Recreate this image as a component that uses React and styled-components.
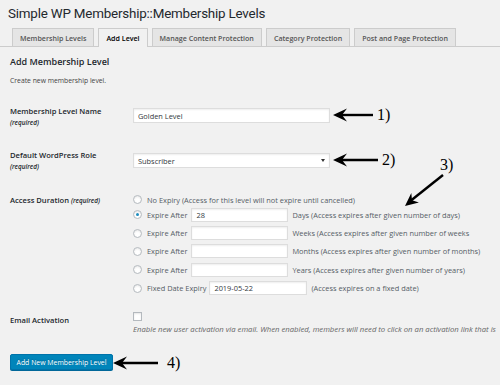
import styled, { createGlobalStyle } from "styled-components";

const GlobalStyle = createGlobalStyle`
  html, body {
    margin: 0;
    padding: 0;
    background: #f1f1f1;
  }
  body {
    font-family: "Open Sans", "Noto Sans", sans-serif;
    color: #23282d;
    overflow: hidden;
  }
`;

const Page = styled.div`
  position: relative;
  width: 500px;
  height: 385px;
  overflow: hidden;
  padding-left: 10px;
  box-sizing: border-box;
`;

const Title = styled.h1`
  margin: 3px 0 0 -2px;
  font-family: Roboto, "Open Sans", sans-serif;
  font-size: 13.4px;
  font-weight: 400;
  letter-spacing: -0.2px;
  line-height: 22px;
  color: #23282d;
  white-space: nowrap;
`;

const TabBar = styled.nav`
  margin: 3px 0 0 -10px;
  padding-left: 12px;
  display: flex;
  gap: 4px;
  border-bottom: 1px solid #ccc;
  height: 18px;
`;

const Tab = styled.span`
  box-sizing: border-box;
  padding: 0 7px;
  display: flex;
  align-items: center;
  font-size: 7.1px;
  font-weight: 600;
  white-space: nowrap;
  border: 1px solid #ccc;
  border-bottom: none;
  background: ${(p) => (p.$active ? "#f1f1f1" : "#e5e5e5")};
  color: ${(p) => (p.$active ? "#000" : "#555")};
  height: ${(p) => (p.$active ? "19px" : "18px")};
`;

const Heading = styled.h2`
  margin: 8px 0 0;
  font-size: 9px;
  font-weight: 600;
  line-height: 14px;
`;

const Intro = styled.p`
  margin: 7px 0 0;
  font-size: 6.8px;
  line-height: 10px;
  color: #444;
`;

const Row = styled.div`
  display: grid;
  grid-template-columns: 123px 1fr;
  align-items: start;
  margin-top: ${(p) => p.$mt}px;
`;

const Label = styled.div`
  font-size: 7.6px;
  font-weight: 600;
  line-height: 11px;
  padding-top: ${(p) => p.$pt || 0}px;
  white-space: nowrap;
`;

const Required = styled.em`
  display: ${(p) => (p.$inline ? "inline" : "block")};
  font-size: 6.4px;
  font-weight: 600;
`;

const TextInput = styled.input`
  box-sizing: border-box;
  width: ${(p) => p.$w}px;
  height: ${(p) => p.$h || 14}px;
  margin: 0;
  margin-top: ${(p) => p.$mt || 0}px;
  padding: 0 4px;
  border: 1px solid #ddd;
  border-radius: 0;
  background: #fff;
  box-shadow: inset 0 1px 2px rgba(0, 0, 0, 0.07);
  font-family: inherit;
  font-size: 7.4px;
  color: #32373c;
  outline: none;
`;

const Select = styled.div`
  box-sizing: border-box;
  width: 197px;
  height: 15px;
  margin-top: 3px;
  padding: 0 4px;
  display: flex;
  align-items: center;
  justify-content: space-between;
  border: 1px solid #ddd;
  background: #fff;
  box-shadow: inset 0 1px 2px rgba(0, 0, 0, 0.07);
  font-size: 7.4px;
  color: #32373c;
`;

const Caret = styled.span`
  width: 0;
  height: 0;
  border-left: 2px solid transparent;
  border-right: 2px solid transparent;
  border-top: 3px solid #333;
`;

const Options = styled.div`
  display: flex;
  flex-direction: column;
  margin-top: 0.5px;
`;

const Option = styled.div`
  display: flex;
  align-items: center;
  height: ${(p) => (p.$first ? 12 : 18.4)}px;
  font-size: 7.4px;
  color: #555d66;
  white-space: nowrap;
`;

const Radio = styled.span`
  box-sizing: border-box;
  width: 9px;
  height: 9px;
  margin-right: 5px;
  border-radius: 50%;
  border: 1px solid #b4b9be;
  background: #fff;
  box-shadow: inset 0 1px 2px rgba(0, 0, 0, 0.1);
  display: flex;
  align-items: center;
  justify-content: center;
  flex-shrink: 0;

  &::after {
    content: "";
    width: 3px;
    height: 3px;
    border-radius: 50%;
    background: ${(p) => (p.$checked ? "#1e8cbe" : "transparent")};
  }
`;

const OptionText = styled.span`
  margin-right: ${(p) => p.$gap || 0}px;
`;

const Hint = styled.span`
  margin-left: 4px;
`;

const Checkbox = styled.span`
  display: block;
  box-sizing: border-box;
  width: 9px;
  height: 9px;
  margin-top: 1px;
  border: 1px solid #b4b9be;
  background: #fff;
  box-shadow: inset 0 1px 2px rgba(0, 0, 0, 0.1);
`;

const Description = styled.p`
  margin: 2.5px 0 0;
  font-size: 7.7px;
  line-height: 11px;
  font-style: italic;
  color: #666;
  white-space: nowrap;
`;

const Button = styled.button`
  margin-top: 19.5px;
  height: 16px;
  width: 103px;
  padding: 0;
  border: 1px solid #0073aa;
  border-radius: 2px;
  background: #0085ba;
  box-shadow: 0 1px 0 #006799;
  color: #fff;
  font-family: inherit;
  font-size: 6.9px;
  text-shadow: 0 -1px 1px #006799;
`;

const Overlay = styled.svg`
  position: absolute;
  left: 0;
  top: 0;
  pointer-events: none;
`;

const Callout = styled.span`
  position: absolute;
  font-family: "Liberation Serif", serif;
  font-size: 16px;
  line-height: 16px;
  color: #000;
`;

const expireRows = [
  { unit: "Days (Access expires after given number of days)", value: "28", checked: true },
  { unit: "Weeks (Access expires after given number of weeks", value: "" },
  { unit: "Months (Access expires after given number of months)", value: "" },
  { unit: "Years (Access expires after given number of years)", value: "" },
];

const calloutArrow = (tipX, tipY, endX) => (
  <g>
    <line x1={tipX + 8} y1={tipY} x2={endX} y2={tipY} stroke="#000" strokeWidth="2.4" />
    <path
      d={`M${tipX} ${tipY} L${tipX + 14} ${tipY - 6.5} L${tipX + 9} ${tipY} L${tipX + 14} ${tipY + 6.5} Z`}
      fill="#000"
    />
  </g>
);

const App = () => {
  return (
    <Page>
      <GlobalStyle />
      <Title>Simple WP Membership::Membership Levels</Title>
      <TabBar>
        <Tab>Membership Levels</Tab>
        <Tab $active>Add Level</Tab>
        <Tab>Manage Content Protection</Tab>
        <Tab>Category Protection</Tab>
        <Tab>Post and Page Protection</Tab>
      </TabBar>

      <Heading>Add Membership Level</Heading>
      <Intro>Create new membership level.</Intro>

      <Row $mt={20}>
        <Label>
          Membership Level Name
          <Required>(required)</Required>
        </Label>
        <TextInput $w={197} $h={15} $mt={2} defaultValue="Golden Level" readOnly />
      </Row>

      <Row $mt={22}>
        <Label>
          Default WordPress Role
          <Required>(required)</Required>
        </Label>
        <Select>
          Subscriber
          <Caret />
        </Select>
      </Row>

      <Row $mt={21}>
        <Label $pt={1.5}>
          Access Duration <Required $inline>(required)</Required>
        </Label>
        <Options>
          <Option $first>
            <Radio />
            No Expiry (Access for this level will not expire until cancelled)
          </Option>
          {expireRows.map((r) => (
            <Option key={r.unit}>
              <Radio $checked={r.checked} />
              <OptionText $gap={4}>Expire After</OptionText>
              <TextInput $w={97} defaultValue={r.value} readOnly />
              <Hint>{r.unit}</Hint>
            </Option>
          ))}
          <Option>
            <Radio />
            <OptionText $gap={3}>Fixed Date Expiry</OptionText>
            <TextInput $w={98} defaultValue="2019-05-22" readOnly />
            <Hint>(Access expires on a fixed date)</Hint>
          </Option>
        </Options>
      </Row>

      <Row $mt={14}>
        <Label $pt={3.5}>Email Activation</Label>
        <div>
          <Checkbox />
          <Description>
            Enable new user activation via email. When enabled, members will need to click on an
            activation link that is
          </Description>
        </div>
      </Row>

      <Button>Add New Membership Level</Button>

      <Overlay width="500" height="385" viewBox="0 0 500 385">
        {calloutArrow(333, 115, 373)}
        {calloutArrow(333, 160, 378)}
        {calloutArrow(113, 363, 158)}
        <line x1="443" y1="175" x2="411" y2="200.5" stroke="#000" strokeWidth="2.4" />
        <path d="M405 206 L411.3 193.1 L412 200.3 L418.9 202.5 Z" fill="#000" />
      </Overlay>
      <Callout style={{ left: 377, top: 107 }}>1)</Callout>
      <Callout style={{ left: 382, top: 152 }}>2)</Callout>
      <Callout style={{ left: 440, top: 157 }}>3)</Callout>
      <Callout style={{ left: 167, top: 355 }}>4)</Callout>
    </Page>
  );
};

export default App;
